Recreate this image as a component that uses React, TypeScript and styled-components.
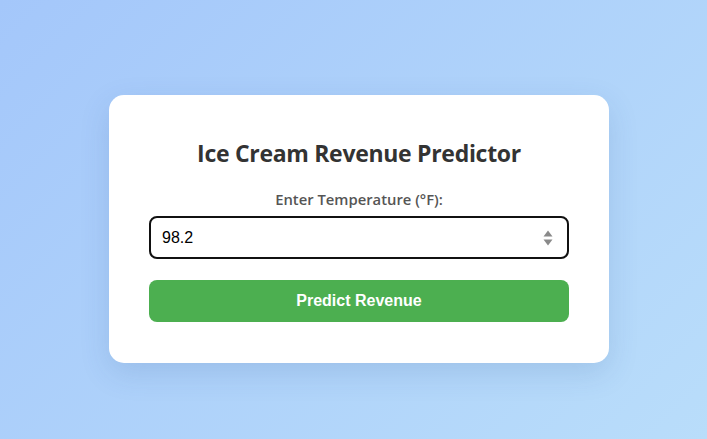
import React from 'react'
import styled, { createGlobalStyle } from 'styled-components'

const GlobalStyle = createGlobalStyle`
  html, body {
    margin: 0;
    padding: 0;
  }
  body {
    font-family: "Open Sans", "Noto Sans", sans-serif;
  }
`

const Page = styled.div`
  width: 707px;
  height: 439px;
  box-sizing: border-box;
  padding: 19px 0 0 11px;
  display: flex;
  align-items: center;
  justify-content: center;
  background: linear-gradient(135deg, #a4c7fa 0%, #b9ddfa 100%);
`

const Card = styled.div`
  width: 500px;
  box-sizing: border-box;
  padding: 40px 40px 41px;
  background: #fff;
  border-radius: 15px;
  box-shadow: 0 10px 30px rgba(40, 80, 140, 0.15);
  display: flex;
  flex-direction: column;
  align-items: stretch;
`

const Title = styled.h2`
  margin: 0 0 18px;
  font-size: 23px;
  letter-spacing: -0.3px;
  line-height: 36px;
  font-weight: 700;
  color: #333;
  text-align: center;
`

const Label = styled.label`
  display: block;
  font-size: 14.8px;
  line-height: 20px;
  font-weight: 600;
  color: #555;
  text-align: center;
  margin-bottom: 7px;
`

const Field = styled.div`
  position: relative;
  margin-bottom: 21px;
`

const Input = styled.input`
  width: 100%;
  height: 43px;
  box-sizing: border-box;
  padding: 0 40px 0 11px;
  border: 2px solid #111;
  border-radius: 8px;
  font-family: "Liberation Sans", Arial, sans-serif;
  font-size: 16px;
  color: #000;
  outline: none;
`

const Spinner = styled.svg`
  position: absolute;
  right: 15px;
  top: 13px;
`

const Button = styled.button`
  height: 42px;
  border: none;
  border-radius: 8px;
  background: #4caf50;
  color: #fff;
  font-family: "Liberation Sans", Arial, sans-serif;
  font-size: 16px;
  font-weight: 700;
  cursor: pointer;
`

export default function App() {
  return (
    <>
      <GlobalStyle />
      <Page>
        <Card>
          <Title>Ice Cream Revenue Predictor</Title>
          <Label htmlFor="temp">Enter Temperature (°F):</Label>
          <Field>
            <Input id="temp" type="text" defaultValue="98.2" />
            <Spinner width="12" height="18" viewBox="0 0 12 18">
              <path d="M6 1.5 L10.5 7.5 H1.5 Z" fill="#8a8a8a" />
              <path d="M6 16.5 L10.5 10.5 H1.5 Z" fill="#8a8a8a" />
            </Spinner>
          </Field>
          <Button>Predict Revenue</Button>
        </Card>
      </Page>
    </>
  )
}
